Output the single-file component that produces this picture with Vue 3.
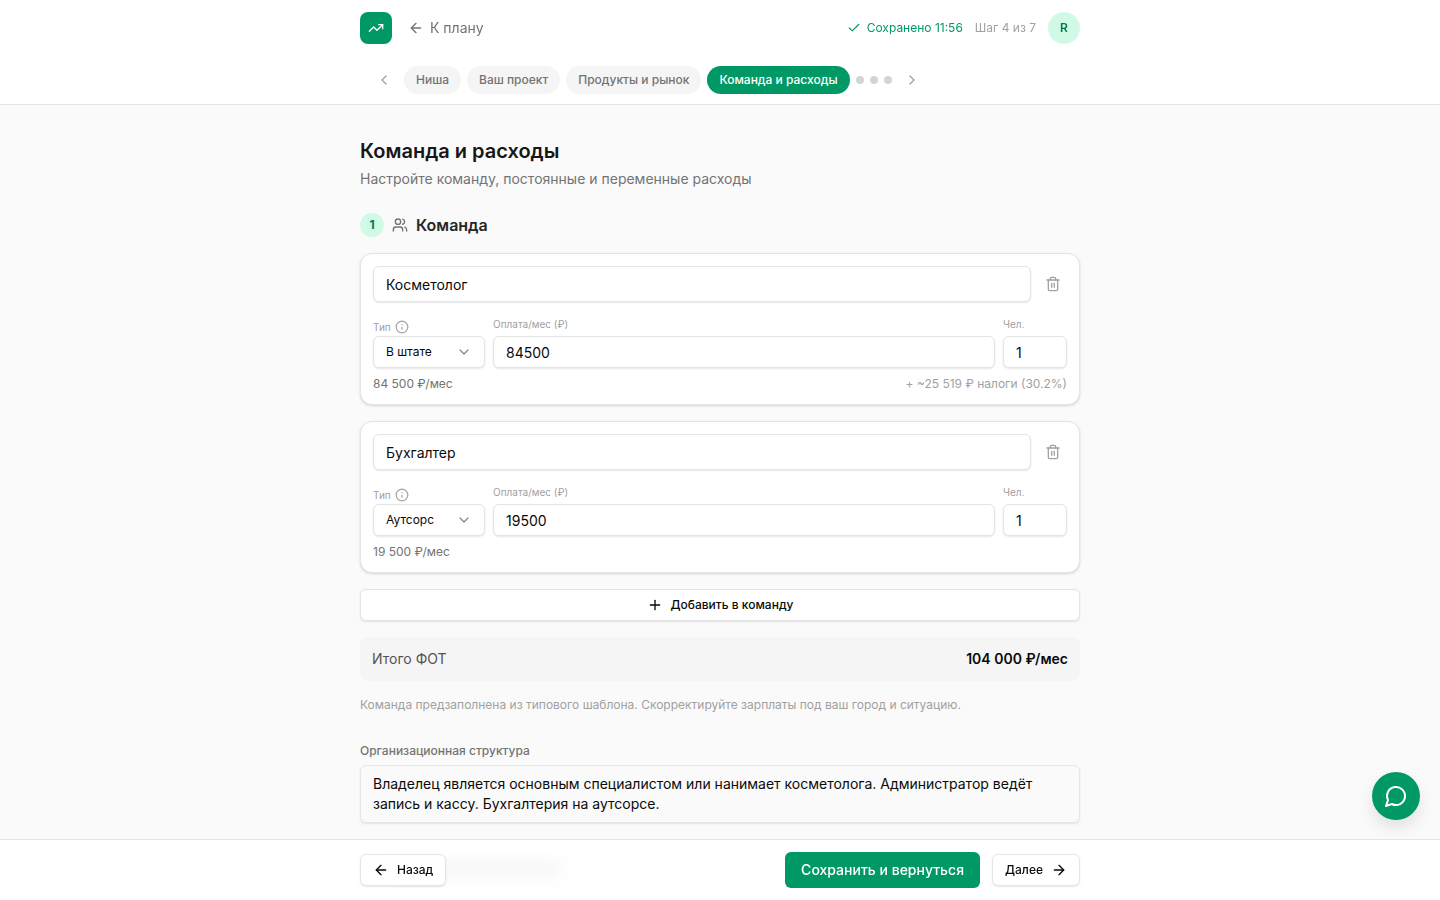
<script setup>
import { ref } from 'vue'

const doneSteps = ['Ниша', 'Ваш проект', 'Продукты и рынок']
const nextSteps = ['Шаг 5', 'Шаг 6', 'Шаг 7']

const team = ref([
  { role: 'Косметолог', type: 'В штате', pay: '84500', count: '1', total: '84 500 ₽/мес', tax: '+ ~25 519 ₽ налоги (30.2%)' },
  { role: 'Бухгалтер', type: 'Аутсорс', pay: '19500', count: '1', total: '19 500 ₽/мес', tax: '' },
])

const structure = ref(
  'Владелец является основным специалистом или нанимает косметолога. Администратор ведёт запись и кассу. Бухгалтерия на аутсорсе.',
)
</script>

<template>
  <div class="page">
    <header class="header">
      <div class="container topbar">
        <a href="#" class="logo" aria-label="Главная">
          <svg class="icon" viewBox="0 0 24 24"><path d="M16 7h6v6" /><path d="m22 7-8.5 8.5-5-5L2 17" /></svg>
        </a>
        <a href="#" class="back">
          <svg class="icon" viewBox="0 0 24 24"><path d="m12 19-7-7 7-7" /><path d="M19 12H5" /></svg>
          К плану
        </a>
        <div class="status">
          <span class="saved">
            <svg class="icon icon-s" viewBox="0 0 24 24"><path d="M20 6 9 17l-5-5" /></svg>
            Сохранено 11:56
          </span>
          <span class="step">Шаг 4 из 7</span>
          <button class="avatar" type="button">R</button>
        </div>
      </div>
      <nav class="container steps" aria-label="Шаги">
        <button class="arrow" type="button" aria-label="Предыдущий шаг">
          <svg class="icon" viewBox="0 0 24 24"><path d="m15 18-6-6 6-6" /></svg>
        </button>
        <button v-for="s in doneSteps" :key="s" class="pill" type="button">{{ s }}</button>
        <button class="pill active" type="button" aria-current="step">Команда и расходы</button>
        <button v-for="s in nextSteps" :key="s" class="dot" type="button" :aria-label="s"></button>
        <button class="arrow" type="button" aria-label="Следующий шаг">
          <svg class="icon" viewBox="0 0 24 24"><path d="m9 18 6-6-6-6" /></svg>
        </button>
      </nav>
    </header>

    <main class="container main">
      <h1>Команда и расходы</h1>
      <p class="subtitle">Настройте команду, постоянные и переменные расходы</p>

      <section class="section">
        <div class="section-head">
          <span class="badge">1</span>
          <svg class="icon" viewBox="0 0 24 24">
            <path d="M16 21v-2a4 4 0 0 0-4-4H6a4 4 0 0 0-4 4v2" />
            <circle cx="9" cy="7" r="4" />
            <path d="M22 21v-2a4 4 0 0 0-3-3.87" />
            <path d="M16 3.13a4 4 0 0 1 0 7.75" />
          </svg>
          <h2>Команда</h2>
        </div>

        <article v-for="(m, i) in team" :key="i" class="card">
          <div class="role-row">
            <input v-model="m.role" class="field role" type="text" aria-label="Должность" />
            <button class="remove" type="button" aria-label="Удалить">
              <svg class="icon" viewBox="0 0 24 24">
                <path d="M3 6h18" />
                <path d="M19 6v14a2 2 0 0 1-2 2H7a2 2 0 0 1-2-2V6" />
                <path d="M8 6V4a2 2 0 0 1 2-2h4a2 2 0 0 1 2 2v2" />
                <path d="M10 11v6" /><path d="M14 11v6" />
              </svg>
            </button>
          </div>
          <div class="params">
            <div class="param">
              <div class="type-label">
                <label :for="'type' + i">Тип</label>
                <button class="info" type="button" aria-label="Подсказка">
                  <svg class="icon icon-s" viewBox="0 0 24 24"><circle cx="12" cy="12" r="10" /><path d="M12 16v-4" /><path d="M12 8h.01" /></svg>
                </button>
              </div>
              <div class="select-wrap">
                <select :id="'type' + i" v-model="m.type" class="field">
                  <option>В штате</option>
                  <option>Аутсорс</option>
                </select>
                <svg class="icon chevron" viewBox="0 0 24 24"><path d="m6 9 6 6 6-6" /></svg>
              </div>
            </div>
            <div class="param">
              <label class="label" :for="'pay' + i">Оплата/мес (₽)</label>
              <input :id="'pay' + i" v-model="m.pay" class="field" type="text" inputmode="numeric" />
            </div>
            <div class="param">
              <label class="label" :for="'count' + i">Чел.</label>
              <input :id="'count' + i" v-model="m.count" class="field" type="text" inputmode="numeric" />
            </div>
          </div>
          <div class="summary">
            <span>{{ m.total }}</span>
            <span class="tax">{{ m.tax }}</span>
          </div>
        </article>

        <button class="btn add" type="button">
          <svg class="icon" viewBox="0 0 24 24"><path d="M5 12h14" /><path d="M12 5v14" /></svg>
          Добавить в команду
        </button>

        <div class="total">
          <span>Итого ФОТ</span>
          <strong>104 000 ₽/мес</strong>
        </div>
        <p class="hint">Команда предзаполнена из типового шаблона. Скорректируйте зарплаты под ваш город и ситуацию.</p>

        <div class="structure">
          <label for="structure">Организационная структура</label>
          <textarea id="structure" v-model="structure" rows="2"></textarea>
        </div>
      </section>

      <div class="section-head upcoming" aria-hidden="true">
        <span class="badge"></span>
        <span class="upcoming-bar"></span>
      </div>
    </main>

    <footer class="footer">
      <div class="container actions">
        <button class="btn" type="button">
          <svg class="icon" viewBox="0 0 24 24"><path d="m12 19-7-7 7-7" /><path d="M19 12H5" /></svg>
          Назад
        </button>
        <div class="forward">
          <button class="save" type="button">Сохранить и вернуться</button>
          <button class="btn" type="button">
            Далее
            <svg class="icon" viewBox="0 0 24 24"><path d="M5 12h14" /><path d="m12 5 7 7-7 7" /></svg>
          </button>
        </div>
      </div>
    </footer>

    <button class="chat" type="button" aria-label="Чат">
      <svg class="icon" viewBox="0 0 24 24"><path d="M7.9 20A9 9 0 1 0 4 16.1L2 22Z" /></svg>
    </button>
  </div>
</template>

<style>
html {
  scrollbar-width: none;
}
body {
  margin: 0;
  background: #fafafa;
}
</style>

<style scoped>
* {
  box-sizing: border-box;
}
.page {
  min-height: 100vh;
  background: #fafafa;
  color: #0a0a0a;
  font-family: Inter, "Liberation Sans", sans-serif;
  font-size: 14px;
  line-height: 20px;
}
button,
input,
select,
textarea {
  font-family: inherit;
  color: inherit;
  margin: 0;
}
button {
  border: 0;
  padding: 0;
  background: none;
  line-height: 16px;
  cursor: pointer;
}
h1,
h2,
p {
  margin: 0;
}
.container {
  width: 100%;
  max-width: 752px;
  margin: 0 auto;
  padding: 0 16px;
}
.icon {
  display: block;
  flex: none;
  width: 16px;
  height: 16px;
  fill: none;
  stroke: currentColor;
  stroke-width: 2;
  stroke-linecap: round;
  stroke-linejoin: round;
}
.icon-s {
  width: 14px;
  height: 14px;
}

.header {
  position: sticky;
  top: 0;
  z-index: 2;
  background: rgba(255, 255, 255, 0.9);
  backdrop-filter: blur(8px);
  border-bottom: 1px solid #e5e5e5;
}
.topbar {
  display: flex;
  align-items: center;
  gap: 16px;
  height: 56px;
}
.logo {
  display: grid;
  place-items: center;
  width: 32px;
  height: 32px;
  border-radius: 8px;
  background: #009966;
  color: #fff;
}
.back {
  display: flex;
  align-items: center;
  gap: 6px;
  color: #737373;
  text-decoration: none;
}
.status {
  display: flex;
  align-items: center;
  gap: 12px;
  margin-left: auto;
  font-size: 12px;
  line-height: 16px;
}
.saved {
  display: flex;
  align-items: center;
  gap: 6px;
  color: #009966;
}
.step {
  color: #a1a1a1;
}
.avatar {
  width: 32px;
  height: 32px;
  border-radius: 50%;
  background: #d0fae5;
  color: #007a55;
  font-size: 12px;
  font-weight: 600;
}
.steps {
  display: flex;
  align-items: center;
  gap: 6px;
  padding: 10px 26px;
}
.arrow {
  display: grid;
  place-items: center;
  width: 28px;
  height: 28px;
  color: #a1a1a1;
}
.pill {
  height: 28px;
  padding: 0 12px;
  border-radius: 14px;
  background: #f5f5f5;
  color: #737373;
  font-size: 12px;
  font-weight: 500;
  white-space: nowrap;
}
.pill.active {
  background: #009966;
  color: #fff;
}
.dot {
  width: 8px;
  height: 8px;
  border-radius: 50%;
  background: #d4d4d4;
}

.main {
  padding-top: 32px;
}
h1 {
  font-size: 20px;
  line-height: 28px;
  font-weight: 600;
  color: #171717;
}
.subtitle {
  margin-top: 4px;
  color: #737373;
}
.section {
  display: flex;
  flex-direction: column;
  gap: 16px;
  margin-top: 24px;
}
.section-head {
  display: flex;
  align-items: center;
  gap: 8px;
  color: #737373;
}
.badge {
  width: 24px;
  height: 24px;
  border-radius: 50%;
  background: #d0fae5;
  color: #007a55;
  font-size: 12px;
  line-height: 24px;
  font-weight: 700;
  text-align: center;
}
h2 {
  font-size: 16px;
  line-height: 24px;
  font-weight: 600;
  color: #262626;
}
.upcoming {
  margin-top: 34px;
}
.upcoming-bar {
  width: 168px;
  height: 12px;
  border-radius: 4px;
  background: #8a8a8a;
}
.card {
  padding: 12px;
  border: 1px solid #e5e5e5;
  border-radius: 12px;
  background: #fff;
  box-shadow: 0 1px 3px rgba(0, 0, 0, 0.1), 0 1px 2px rgba(0, 0, 0, 0.06);
}
.role-row {
  display: flex;
  align-items: center;
  gap: 8px;
}
.field {
  display: block;
  width: 100%;
  min-width: 0;
  height: 32px;
  padding: 1px 12px 0;
  border: 1px solid #e5e5e5;
  border-radius: 6px;
  background: #fff;
  font-size: 14px;
  outline: none;
  box-shadow: 0 1px 2px rgba(0, 0, 0, 0.1);
}
.role {
  flex: 1;
  height: 36px;
}
.remove {
  display: grid;
  place-items: center;
  width: 28px;
  height: 28px;
  color: #a1a1a1;
}
.params {
  display: grid;
  grid-template-columns: 112px 1fr 64px;
  align-items: end;
  gap: 8px;
  margin-top: 12px;
  font-size: 10px;
  line-height: 15px;
  color: #a1a1a1;
}
.params .field {
  color: #0a0a0a;
}
.type-label {
  display: flex;
  align-items: center;
  gap: 4px;
  height: 22px;
  padding-top: 4px;
}
.type-label label {
  line-height: 14px;
}
.label {
  display: block;
  margin-bottom: 4px;
}
.select-wrap {
  position: relative;
}
select.field {
  appearance: none;
  padding-top: 0;
  padding-bottom: 1px;
  font-size: 12px;
}
.chevron {
  position: absolute;
  top: 8px;
  right: 13px;
  color: #8a8a8a;
  pointer-events: none;
}
.summary {
  display: flex;
  justify-content: space-between;
  margin-top: 8px;
  font-size: 12px;
  line-height: 16px;
  color: #737373;
}
.tax {
  color: #a1a1a1;
}
.btn {
  display: flex;
  align-items: center;
  justify-content: center;
  gap: 8px;
  height: 32px;
  padding: 0 12px;
  border: 1px solid #e5e5e5;
  border-radius: 6px;
  background: #fff;
  box-shadow: 0 1px 2px rgba(0, 0, 0, 0.1);
  font-size: 12px;
  font-weight: 500;
}
.total {
  display: flex;
  justify-content: space-between;
  padding: 12px;
  border-radius: 8px;
  background: #f5f5f5;
  color: #525252;
}
.total strong {
  font-weight: 600;
  color: #0a0a0a;
}
.hint {
  font-size: 12px;
  line-height: 16px;
  color: #a1a1a1;
}
.structure {
  display: flex;
  flex-direction: column;
  gap: 6px;
  margin-top: 14px;
}
.structure label {
  font-size: 12px;
  line-height: 16px;
  font-weight: 500;
  color: #737373;
}
textarea {
  display: block;
  width: 100%;
  padding: 8px 12px;
  border: 1px solid #e5e5e5;
  border-radius: 6px;
  background: transparent;
  box-shadow: 0 1px 2px rgba(0, 0, 0, 0.1);
  font-size: 14px;
  line-height: 20px;
  resize: none;
  outline: none;
}

.footer {
  position: fixed;
  right: 0;
  bottom: 0;
  left: 0;
  z-index: 2;
  border-top: 1px solid #e5e5e5;
  background: rgba(255, 255, 255, 0.9);
  backdrop-filter: blur(8px);
}
.actions {
  display: flex;
  align-items: center;
  justify-content: space-between;
  padding-top: 12px;
  padding-bottom: 12px;
}
.forward {
  display: flex;
  align-items: center;
  gap: 12px;
}
.save {
  height: 36px;
  padding: 0 16px;
  border-radius: 6px;
  background: #009966;
  color: #fff;
  font-size: 14px;
  line-height: 20px;
  font-weight: 500;
}
.chat {
  position: fixed;
  right: 20px;
  bottom: 80px;
  z-index: 3;
  display: grid;
  place-items: center;
  width: 48px;
  height: 48px;
  border-radius: 50%;
  background: #009966;
  color: #fff;
  box-shadow: 0 8px 16px rgba(0, 0, 0, 0.1);
}
.chat .icon {
  width: 24px;
  height: 24px;
}
</style>
